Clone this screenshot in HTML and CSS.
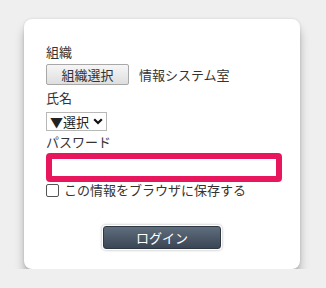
FILE: index.html
```html
<!DOCTYPE html>
<html lang="ja">
<head>
    <meta charset="UTF-8">
    <meta name="viewport" content="width=device-width, initial-scale=1.0">
    <title>ログイン</title>
    <link rel="stylesheet" href="styles.css">
</head>
<body>
    <div class="card">
        <div class="label first">組織</div>
        <div class="org-row">
            <button class="org-btn">組織選択</button>
            <span class="org-name">情報システム室</span>
        </div>
        <div class="label">氏名</div>
        <div class="select">▼選択
            <svg class="chev" width="10" height="7" viewBox="0 0 10 7"><path d="M1.2 1.2 L5 5 L8.8 1.2" fill="none" stroke="#111" stroke-width="2.2"/></svg>
        </div>
        <div class="label pw-label">パスワード</div>
        <input class="pw" type="password">
        <label class="remember"><span class="box"></span>この情報をブラウザに保存する</label>
        <button class="login">ログイン</button>
    </div>
</body>
</html>
```

FILE: styles.css
```css
body {
    margin: 0;
    background: #efefef;
    font-family: "Noto Sans CJK JP", "Noto Sans", sans-serif;
    font-size: 13px;
    color: #333;
}

.card {
    margin: 19px 0 0 24px;
    width: 254px;
    height: 226px;
    padding: 24px 0 0 22px;
    background: #fff;
    border-radius: 8px;
    box-shadow: 0 9px 10px rgba(0, 0, 0, 0.26), 0 0 3px rgba(0, 0, 0, 0.12);
    display: flex;
    flex-direction: column;
    align-items: flex-start;
}

.label {
    line-height: 18px;
    margin-top: 4px;
}

.label.first {
    margin-top: 0;
}

.org-row {
    display: flex;
    align-items: center;
    margin-top: 3px;
}

.org-btn {
    width: 83px;
    height: 21px;
    padding: 0;
    font-family: inherit;
    font-size: 13px;
    color: #333;
    background: linear-gradient(#f6f6f6, #dedede);
    border: 1px solid #a8a8a8;
    border-radius: 2px;
    line-height: 19px;
}

.org-name {
    margin-left: 10px;
    line-height: 18px;
}

.select {
    margin-top: 5px;
    width: 59px;
    height: 17px;
    border: 1px solid #b8b8b8;
    display: flex;
    align-items: center;
    justify-content: center;
    line-height: 17px;
    color: #222;
}

.chev {
    margin-left: 4px;
}

.pw-label {
    margin-top: 2px;
}

.pw {
    margin: 2px 0 0 0;
    width: 236px;
    height: 29px;
    box-sizing: border-box;
    border: 6px solid #e8175d;
    border-radius: 4px;
    outline: none;
    padding: 0;
}

.remember {
    display: flex;
    align-items: center;
    line-height: 16px;
}

.box {
    width: 11px;
    height: 11px;
    border: 1px solid #555;
    border-radius: 2px;
    margin-right: 5px;
}

.login {
    margin: 28px 0 0 57px;
    width: 118px;
    height: 23px;
    padding: 0;
    font-family: inherit;
    font-size: 13px;
    color: #fff;
    background: linear-gradient(#5f6d7d, #3b4655);
    border: 1px solid #2e3844;
    border-radius: 3px;
    box-shadow: 0 0 0 1px #fff, 0 0 2px 2px rgba(0, 0, 0, 0.15);
    line-height: 21px;
}
```
